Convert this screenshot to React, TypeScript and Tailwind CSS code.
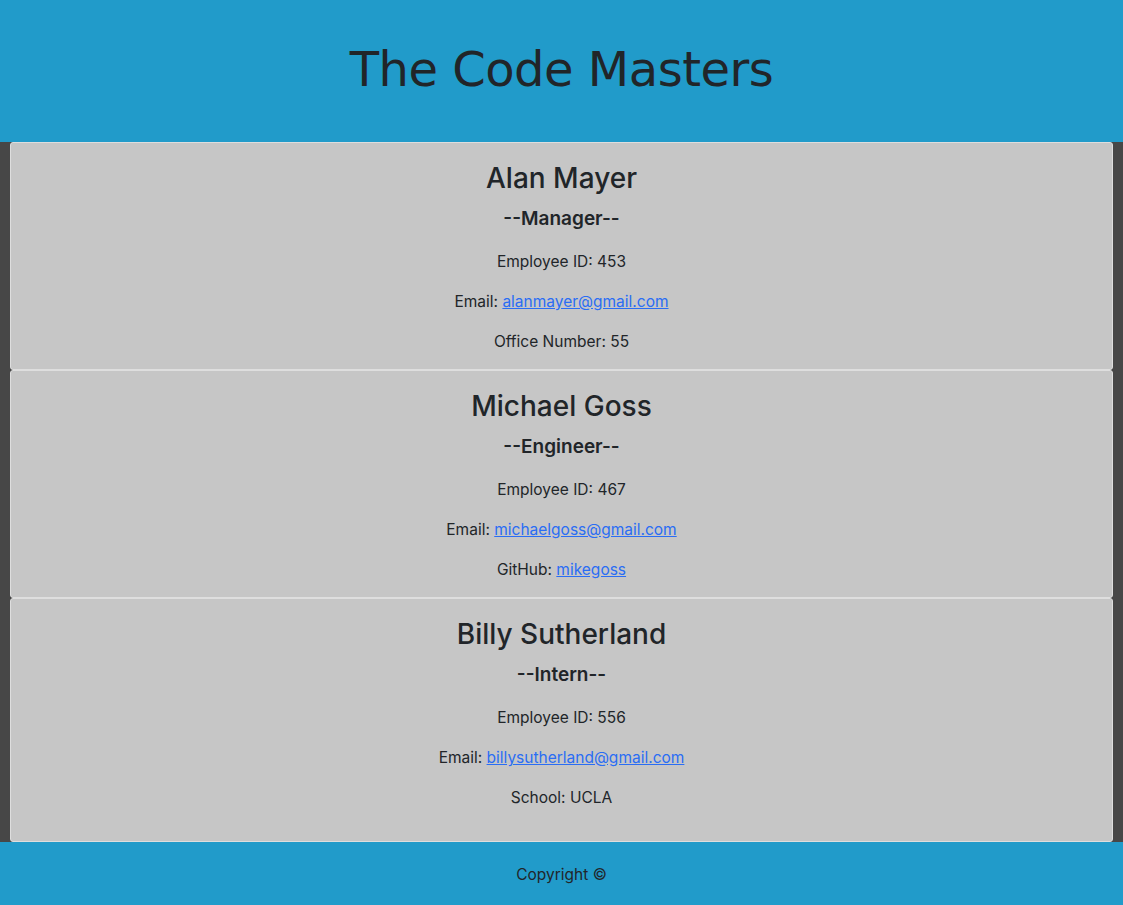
const employees = [
  {
    name: "Alan Mayer",
    role: "Manager",
    id: 453,
    email: "alanmayer@gmail.com",
    extraLabel: "Office Number",
    extra: "55",
    link: false,
  },
  {
    name: "Michael Goss",
    role: "Engineer",
    id: 467,
    email: "michaelgoss@gmail.com",
    extraLabel: "GitHub",
    extra: "mikegoss",
    link: true,
  },
  {
    name: "Billy Sutherland",
    role: "Intern",
    id: 556,
    email: "billysutherland@gmail.com",
    extraLabel: "School",
    extra: "UCLA",
    link: false,
  },
]

export default function App() {
  return (
    <div className="flex min-h-screen flex-col bg-[#474747] font-['Inter','Noto_Sans',sans-serif] text-[#212529]">
      {/* header */}
      <header className="flex h-[142px] items-center justify-center bg-[#219bca] pb-[4px]">
        <h1 className="font-['DejaVu_Sans',sans-serif] text-[48px] leading-none tracking-[-0.5px] text-[#212529]">
          The Code Masters
        </h1>
      </header>

      <main className="flex flex-1 flex-col px-[10px]">
        {employees.map((emp, i) => (
          <div
            key={emp.id}
            className={
              "flex flex-col items-center rounded-[3px] border border-[#dedede] bg-[#c6c6c6] pt-[15px] text-center" +
              (i === employees.length - 1 ? " flex-1" : "")
            }
          >
            <h2 className="text-[28px] font-medium leading-[40px]">{emp.name}</h2>
            <h3 className="mt-[6px] text-[19px] font-semibold leading-[30px]">--{emp.role}--</h3>
            <p className="mt-[16px] mb-4 text-[15.5px] leading-6">Employee ID: {emp.id}</p>
            <p className="mb-4 text-[15.5px] leading-6">
              Email:{" "}
              <a href={"mailto:" + emp.email} className="text-[#2a6df4] underline">
                {emp.email}
              </a>
            </p>
            <p className="mb-[15px] text-[15.5px] leading-6">
              {emp.extraLabel}:{" "}
              {emp.link ? (
                <a href={"https://github.com/" + emp.extra} className="text-[#2a6df4] underline">
                  {emp.extra}
                </a>
              ) : (
                emp.extra
              )}
            </p>
          </div>
        ))}
      </main>

      <footer className="flex h-[63px] items-center justify-center bg-[#219bca] pt-[2px] text-[15.5px]">
        Copyright ©
      </footer>
    </div>
  )
}
